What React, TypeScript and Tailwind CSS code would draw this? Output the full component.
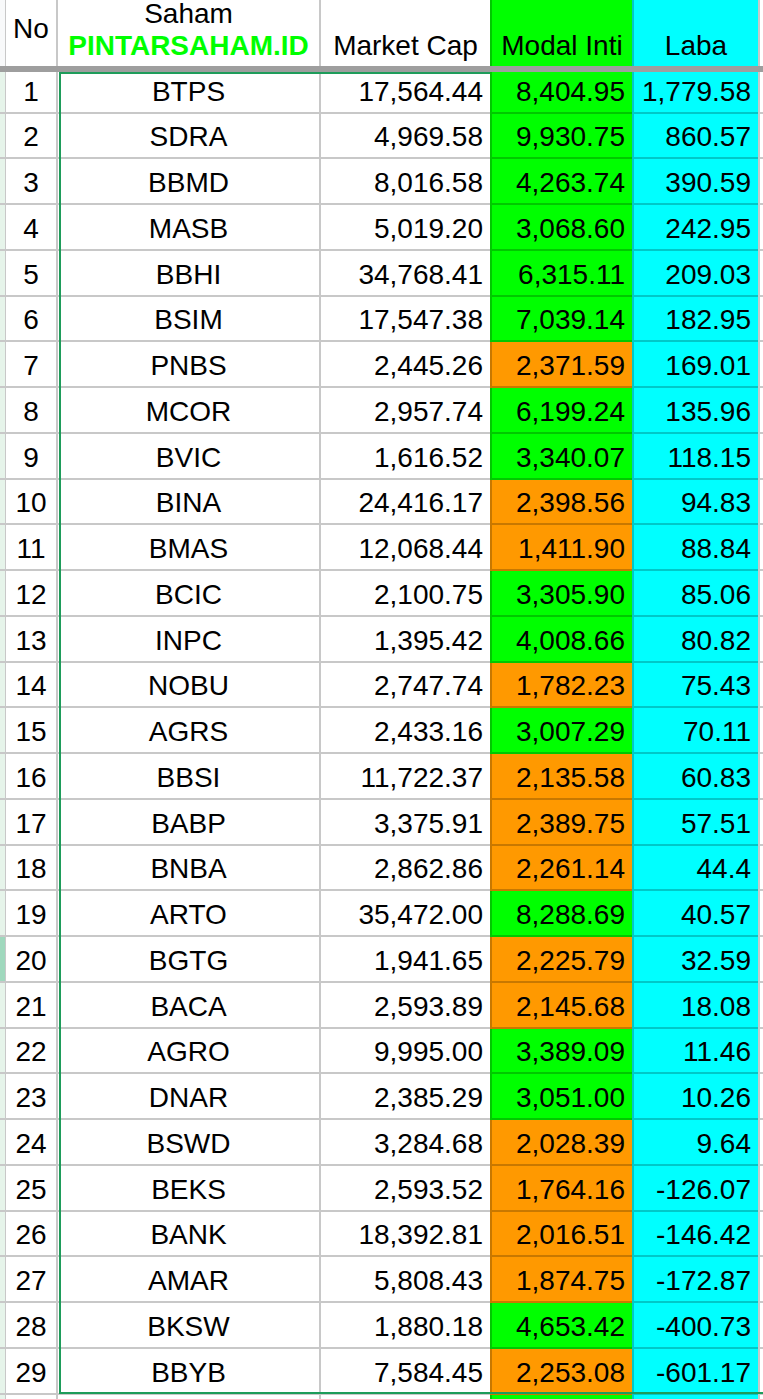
import React from "react";

type Row = [string, string, string, string];

const rows: Row[] = [
  ["BTPS", "17,564.44", "8,404.95", "1,779.58"],
  ["SDRA", "4,969.58", "9,930.75", "860.57"],
  ["BBMD", "8,016.58", "4,263.74", "390.59"],
  ["MASB", "5,019.20", "3,068.60", "242.95"],
  ["BBHI", "34,768.41", "6,315.11", "209.03"],
  ["BSIM", "17,547.38", "7,039.14", "182.95"],
  ["PNBS", "2,445.26", "2,371.59", "169.01"],
  ["MCOR", "2,957.74", "6,199.24", "135.96"],
  ["BVIC", "1,616.52", "3,340.07", "118.15"],
  ["BINA", "24,416.17", "2,398.56", "94.83"],
  ["BMAS", "12,068.44", "1,411.90", "88.84"],
  ["BCIC", "2,100.75", "3,305.90", "85.06"],
  ["INPC", "1,395.42", "4,008.66", "80.82"],
  ["NOBU", "2,747.74", "1,782.23", "75.43"],
  ["AGRS", "2,433.16", "3,007.29", "70.11"],
  ["BBSI", "11,722.37", "2,135.58", "60.83"],
  ["BABP", "3,375.91", "2,389.75", "57.51"],
  ["BNBA", "2,862.86", "2,261.14", "44.4"],
  ["ARTO", "35,472.00", "8,288.69", "40.57"],
  ["BGTG", "1,941.65", "2,225.79", "32.59"],
  ["BACA", "2,593.89", "2,145.68", "18.08"],
  ["AGRO", "9,995.00", "3,389.09", "11.46"],
  ["DNAR", "2,385.29", "3,051.00", "10.26"],
  ["BSWD", "3,284.68", "2,028.39", "9.64"],
  ["BEKS", "2,593.52", "1,764.16", "-126.07"],
  ["BANK", "18,392.81", "2,016.51", "-146.42"],
  ["AMAR", "5,808.43", "1,874.75", "-172.87"],
  ["BKSW", "1,880.18", "4,653.42", "-400.73"],
  ["BBYB", "7,584.45", "2,253.08", "-601.17"],
];

const isGreen = (v: string) => parseFloat(v.replace(/,/g, "")) >= 3000;

function DataRow({ no, row, height }: { no: number; row: Row; height: string }) {
  const [code, cap, modal, laba] = row;
  const green = isGreen(modal);
  return (
    <div className={`flex ${height}`}>
      <div
        className={`w-[6px] shrink-0 border-r border-b-2 border-[#c8c8c8] ${
          no === 20 ? "bg-[#9fd8bd]" : "bg-[#e6f4ea]"
        }`}
      />
      <div className="w-[52px] shrink-0 border-r-2 border-b-2 border-[#c8c8c8] flex items-end justify-center pb-[5px]">
        {no}
      </div>
      <div className="w-[263px] shrink-0 border-r-2 border-b-2 border-[#c8c8c8] flex items-end justify-center pb-[5px]">
        {code}
      </div>
      <div className="w-[169px] shrink-0 border-b-2 border-[#c8c8c8] flex items-end justify-end pr-[7px] pb-[5px]">
        {cap}
      </div>
      <div
        className={`w-[142px] shrink-0 border-l-2 border-b-2 flex items-end justify-end pr-[7px] pb-[5px] ${
          green ? "bg-[#00ff00] border-[#00c800]" : "bg-[#ff9900] border-[#c87800]"
        }`}
      >
        {modal}
      </div>
      <div className="w-[126px] shrink-0 border-l-2 border-b-2 border-[#00c8c8] bg-[#00ffff] flex items-end justify-end pr-[7px] pb-[5px]">
        {laba}
      </div>
      <div className="w-[2px] shrink-0 bg-[#c8c8c8]" />
      <div className="flex-1 border-b-2 border-[#c8c8c8]" />
    </div>
  );
}

export default function App() {
  return (
    <div className="relative w-[763px] h-[1399px] overflow-hidden bg-white text-black text-[28px] leading-[31px] font-['Liberation_Sans',Arial,sans-serif]">
      {/* header */}
      <div className="flex h-[66px]">
        <div className="w-[6px] shrink-0 border-r border-[#c8c8c8] bg-[#f8f9fa]" />
        <div className="w-[52px] shrink-0 border-r-2 border-[#c8c8c8] flex items-end justify-center pb-[22px]">
          No
        </div>
        <div className="w-[263px] shrink-0 border-r-2 border-[#c8c8c8] flex flex-col items-center justify-end pb-[5px]">
          <div className="leading-[27px]">Saham</div>
          <div className="mt-[3px] font-bold text-[#00ff00]">PINTARSAHAM.ID</div>
        </div>
        <div className="w-[169px] shrink-0 flex items-end justify-center pb-[5px]">Market Cap</div>
        <div className="w-[142px] shrink-0 border-l-2 border-[#00c800] bg-[#00ff00] flex items-end justify-center pb-[5px]">
          Modal Inti
        </div>
        <div className="w-[126px] shrink-0 border-l-2 border-[#00c8c8] bg-[#00ffff] flex items-end justify-center pb-[5px]">
          Laba
        </div>
        <div className="w-[2px] shrink-0 bg-[#c8c8c8]" />
        <div className="flex-1" />
      </div>
      <div className="h-[6px] bg-[#9e9e9e]" />

      {/* rows */}
      {rows.map((r, i) => (
        <DataRow
          key={r[0]}
          no={i + 1}
          row={r}
          height={i === 0 ? "h-[42px]" : (i - 1) % 4 === 0 ? "h-[45px]" : "h-[46px]"}
        />
      ))}

      {/* partially visible next row */}
      <div className="flex h-[20px]">
        <div className="w-[6px] shrink-0 border-r border-[#c8c8c8] bg-[#e6f4ea]" />
        <div className="w-[52px] shrink-0 border-r-2 border-[#c8c8c8]" />
        <div className="w-[263px] shrink-0 border-r-2 border-[#c8c8c8]" />
        <div className="w-[169px] shrink-0" />
        <div className="w-[142px] shrink-0 border-l-2 border-[#00c800] bg-[#00ff00]" />
        <div className="w-[126px] shrink-0 border-l-2 border-[#00c8c8] bg-[#00ffff]" />
        <div className="w-[2px] shrink-0 bg-[#c8c8c8]" />
        <div className="flex-1" />
      </div>

      {/* selection range */}
      <div className="pointer-events-none absolute left-[59px] top-[72px] w-[720px] h-[1322px] border-l-2 border-b-2 border-[#1e9c5a]" />
      <div className="pointer-events-none absolute left-[59px] top-[72px] w-[431px] h-[2px] bg-[#1e9c5a]" />
    </div>
  );
}
